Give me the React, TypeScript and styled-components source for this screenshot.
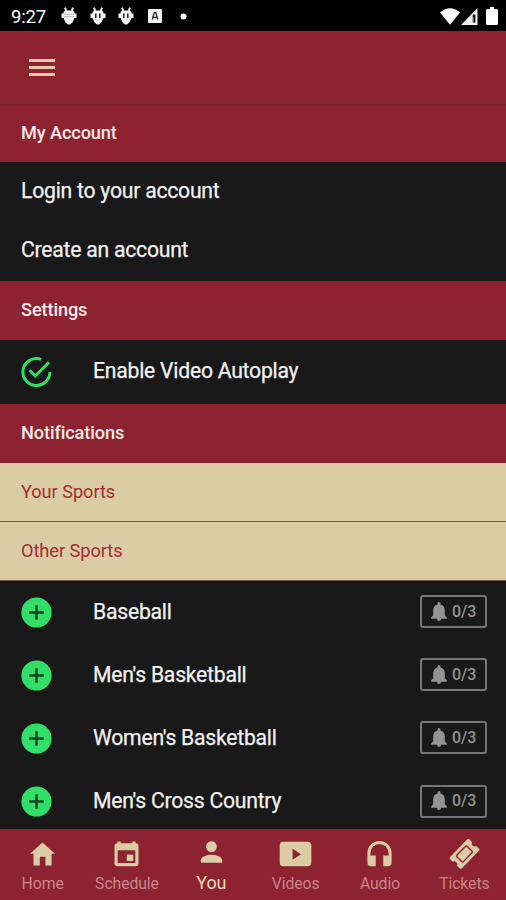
import React from 'react';
import styled, { createGlobalStyle } from 'styled-components';
import { MdPerson } from 'react-icons/md';

const GlobalStyle = createGlobalStyle`
  * { box-sizing: border-box; }
  body { margin: 0; background: #191919; font-family: Roboto, sans-serif; }
`;

const garnet = '#8d2331';
const gold = '#dccca6';
const green = '#32de68';

const Screen = styled.div`
  width: 506px;
  height: 900px;
  display: flex;
  flex-direction: column;
  overflow: hidden;
  background: #191919;
`;

const StatusBar = styled.div`
  height: 31px;
  flex: none;
  display: flex;
  align-items: center;
  justify-content: space-between;
  padding: 1px 8px 0 11px;
  background: #000;
  color: #fff;
`;

const StatusGroup = styled.div`
  display: flex;
  align-items: center;
  svg { display: block; }
`;

const Clock = styled.span`
  width: 50px;
  font-size: 18.5px;
  line-height: 20px;
  letter-spacing: -0.2px;
  white-space: nowrap;
  padding-top: 1px;
`;

const Slot = styled.div<{ $w: number }>`
  width: ${(p) => p.$w}px;
  flex: none;
`;

const Toolbar = styled.header`
  height: 75px;
  flex: none;
  padding: 28px 29px;
  background: ${garnet};
  border-bottom: 2px solid #7c1f2b;
`;

const MenuButton = styled.button`
  display: flex;
  flex-direction: column;
  gap: 4px;
  width: 26px;
  padding: 0;
  border: 0;
  background: none;
`;

const MenuBar = styled.span`
  height: 3px;
  background: #e5cba8;
`;

const SectionHeader = styled.h2<{ $height: number; $sub?: boolean }>`
  height: ${(p) => p.$height}px;
  flex: none;
  margin: 0;
  padding: 0 21px ${(p) => (p.$sub ? 1 : 3)}px;
  display: flex;
  align-items: center;
  background: ${(p) => (p.$sub ? gold : garnet)};
  color: ${(p) => (p.$sub ? '#a12e30' : '#f6eae6')};
  font-size: 18.2px;
  font-weight: ${(p) => (p.$sub ? 400 : 500)};
  letter-spacing: ${(p) => (p.$sub ? -0.05 : -0.12)}px;
  border-bottom: ${(p) => (p.$sub ? '1px solid #6b5b47' : '0')};
`;

const Row = styled.div<{ $height: number }>`
  height: ${(p) => p.$height}px;
  flex: none;
  display: flex;
  align-items: center;
  padding: 0 19px 0 21px;
  color: #f2f2f2;
  svg { display: block; }
`;

const SportList = styled.div`
  flex: 1;
  min-height: 0;
  overflow: hidden;
`;

const RowIcon = styled.div`
  width: 72px;
  color: ${green};
  padding-bottom: 1px;
`;

const RowLabel = styled.span`
  flex: 1;
  padding-bottom: 3px;
  font-size: 21.2px;
  font-weight: 400;
  white-space: nowrap;
  letter-spacing: -0.25px;
  -webkit-text-stroke: 0.25px currentColor;
`;

const AlertBadge = styled.div`
  width: 67px;
  height: 33px;
  margin-bottom: 2px;
  padding-left: 9px;
  display: flex;
  align-items: center;
  border: 2px solid #777;
  border-radius: 3px;
  color: #939393;
  font-size: 16px;
  font-weight: 500;
`;

const BadgeCount = styled.span`
  margin-left: 5px;
  letter-spacing: -0.1px;
  padding-bottom: 1px;
`;

const TabBar = styled.nav`
  height: 71px;
  flex: none;
  display: grid;
  grid-template-columns: repeat(6, 1fr);
  background: ${garnet};
`;

const Tab = styled.div<{ $active?: boolean }>`
  display: flex;
  flex-direction: column;
  align-items: center;
  padding-top: ${(p) => (p.$active ? 7 : 9)}px;
  padding-left: 1px;
  color: ${gold};
  svg { display: block; height: 32px; }
`;

const TabLabel = styled.span<{ $active?: boolean }>`
  font-size: ${(p) => (p.$active ? 18 : 15.8)}px;
  line-height: 20px;
  margin-top: ${(p) => (p.$active ? 5 : 4)}px;
  letter-spacing: -0.1px;
  color: ${(p) => (p.$active ? '#eadbb8' : '#c8868a')};
`;

const Bug = ({ filled }: { filled?: boolean }) => (
  <svg width="16" height="18" viewBox="0 0 16 18">
    <path d="M4 .7L5.200 4M12 .7L10.800 4" stroke="#f4f4f4" strokeWidth="2" />
    <path d="M2.500 5L4 3.500h8L13.500 5v1.500H15.500v4.500H13.500L11.500 15.500 9 17.500H7L4.500 15.500 2.500 11H.5V6.500h2z" fill="#f4f4f4" />
    {filled ? (
      <path d="M3 7.300h10M3 9.600h10" stroke="#bbb" strokeWidth="1" />
    ) : (
      <path d="M5.800 6.500v4.500M9.800 6.500v4.500" stroke="#111" strokeWidth="1.400" />
    )}
  </svg>
);

const AppNotice = () => (
  <svg width="14" height="14" viewBox="0 0 14 14">
    <rect width="14" height="14" rx="1" fill="#f4f4f4" />
    <path d="M4.300 10.500L6.200 3.600h1.600l1.900 6.900M5.200 8.300h3.600" fill="none" stroke="#222" strokeWidth="1.300" />
  </svg>
);

const Wifi = () => (
  <svg width="20" height="17" viewBox="0 0 20 17">
    <path d="M0 4.500Q10-4 20 4.500L10 16.800z" fill="#fff" />
  </svg>
);

const Signal = () => (
  <svg width="17" height="17" viewBox="0 0 17 17">
    <path d="M0 17L16.500 0v17z" fill="#f2f2f2" />
    <path d="M11.700 6.500h2.700v8h-2.700z" fill="#000" />
    <path d="M12.700 9v5" stroke="#aaa" strokeWidth=".7" />
  </svg>
);

const Battery = () => (
  <svg width="12" height="18" viewBox="0 0 12 18">
    <path d="M1.500 2H4V0h4v2h2.500Q12 2 12 3.500v13q0 1.500-1.500 1.500h-9Q0 18 0 16.500v-13Q0 2 1.500 2z" fill="#fff" />
  </svg>
);

const CheckRing = () => (
  <svg width="31" height="32" viewBox="0 0 31 32" fill="none" stroke={green} strokeWidth="3">
    <path d="M20.200 3.400A13.500 13.500 0 1 0 28.900 16" />
    <path d="M8.500 14.300l5.700 5.700L28 6.200" />
  </svg>
);

const PlusDisc = () => (
  <svg width="31" height="31" viewBox="0 0 31 31">
    <circle cx="15.500" cy="15.500" r="15.100" fill="currentColor" />
    <path d="M15.500 8.200v14.600M8.200 15.500h14.600" stroke="#14401f" strokeWidth="2.400" />
  </svg>
);

const BellIcon = () => (
  <svg width="16" height="20" viewBox="0 0 16 20">
    <path
      d="M6.500 2.500V1.600a1.500 1.500 0 0 1 3 0v.9c2.800.7 4.300 3 4.300 5.800v5l2 1.900v1.500H10a2 2.300 0 0 1-4 0H.2v-1.500l2-1.900v-5c0-2.800 1.500-5.100 4.300-5.800z"
      fill="currentColor"
    />
  </svg>
);

const HomeIcon = () => (
  <svg width="25" height="32" viewBox="0 0 25 32">
    <path d="M12.500 4.500L25 15.800h-3.400v11.700h-6.200v-8.700H9.800v8.700H3.500V15.800H0z" fill="currentColor" />
  </svg>
);

const CalendarIcon = () => (
  <svg width="25" height="32" viewBox="0 0 25 32">
    <path
      fillRule="evenodd"
      fill="currentColor"
      d="M3.500 3.500h3.200v1.800h11.600V3.500h3.200v1.800q3 .2 3 3v17q0 2.900-3 2.900h-18q-3 0-3-2.900v-17q0-2.800 3-3zM3.700 12.300v12.600h17.600V12.300z"
    />
    <path d="M12.800 16.600h6.500v6.500h-6.500z" fill="currentColor" />
  </svg>
);

const VideoIcon = () => (
  <svg width="33" height="32" viewBox="0 0 33 32">
    <path
      fillRule="evenodd"
      fill="currentColor"
      d="M4.500 3.700h24q3.800 0 3.800 3.800v17q0 3.800-3.800 3.800h-24Q.7 28.300.7 24.500V7.500q0-3.800 3.800-3.800zM13.600 10.700v11l8.400-5.500z"
    />
  </svg>
);

const AudioIcon = () => (
  <svg width="25" height="32" viewBox="0 0 25 32">
    <path
      d="M.4 15a12.100 12.100 0 0 1 24.200 0v9.500q0 3.800-3.800 3.800h-4.500V17.600h5.300V15a9.100 9.100 0 0 0-18.200 0v2.600h5.300v10.700H4.200Q.4 28.300.4 24.500z"
      fill="currentColor"
    />
  </svg>
);

const TicketIcon = () => (
  <svg width="32" height="32" viewBox="0 0 32 32">
    <g transform="translate(16.500 15.900) rotate(-46)">
      <path
        d="M-12.500-8.200h25q1.300 0 1.300 1.300v4a3 3 0 0 0 0 5.800v4q0 1.300-1.300 1.300h-25q-1.300 0-1.300-1.300v-4a3 3 0 0 0 0-5.800v-4q0-1.300 1.300-1.300z"
        fill="currentColor"
      />
      <rect x="-7.300" y="-4.600" width="14.600" height="9.200" rx="1" fill="none" stroke={garnet} strokeWidth="1.400" />
    </g>
  </svg>
);

const sports = ['Baseball', "Men's Basketball", "Women's Basketball", "Men's Cross Country"];

const tabs = [
  { label: 'Home', icon: <HomeIcon /> },
  { label: 'Schedule', icon: <CalendarIcon /> },
  { label: 'You', icon: <MdPerson size={37} />, active: true },
  { label: 'Videos', icon: <VideoIcon /> },
  { label: 'Audio', icon: <AudioIcon /> },
  { label: 'Tickets', icon: <TicketIcon /> },
];

export default function App() {
  return (
    <>
      <GlobalStyle />
      <Screen>
        <StatusBar>
          <StatusGroup>
            <Clock>9:27</Clock>
            <Slot $w={28.500}><Bug filled /></Slot>
            <Slot $w={28.500}><Bug /></Slot>
            <Slot $w={30}><Bug /></Slot>
            <Slot $w={32}><AppNotice /></Slot>
            <svg width="7" height="7" viewBox="0 0 7 7"><circle cx="3.500" cy="3.500" r="3" fill="#fff" /></svg>
          </StatusGroup>
          <StatusGroup>
            <Slot $w={21}><Wifi /></Slot>
            <Slot $w={25}><Signal /></Slot>
            <Battery />
          </StatusGroup>
        </StatusBar>
        <Toolbar>
          <MenuButton aria-label="Menu">
            <MenuBar />
            <MenuBar />
            <MenuBar />
          </MenuButton>
        </Toolbar>
        <SectionHeader $height={56}>My Account</SectionHeader>
        <Row $height={59}><RowLabel>Login to your account</RowLabel></Row>
        <Row $height={60}><RowLabel>Create an account</RowLabel></Row>
        <SectionHeader $height={59}>Settings</SectionHeader>
        <Row $height={64}>
          <RowIcon><CheckRing /></RowIcon>
          <RowLabel>Enable Video Autoplay</RowLabel>
        </Row>
        <SectionHeader $height={59}>Notifications</SectionHeader>
        <SectionHeader $height={59} $sub>Your Sports</SectionHeader>
        <SectionHeader $height={59} $sub>Other Sports</SectionHeader>
        <SportList>
          {sports.map((name) => (
            <Row key={name} $height={63.200}>
              <RowIcon><PlusDisc /></RowIcon>
              <RowLabel>{name}</RowLabel>
              <AlertBadge>
                <BellIcon />
                <BadgeCount>0/3</BadgeCount>
              </AlertBadge>
            </Row>
          ))}
        </SportList>
        <TabBar>
          {tabs.map((t) => (
            <Tab key={t.label} $active={t.active}>
              {t.icon}
              <TabLabel $active={t.active}>{t.label}</TabLabel>
            </Tab>
          ))}
        </TabBar>
      </Screen>
    </>
  );
}
